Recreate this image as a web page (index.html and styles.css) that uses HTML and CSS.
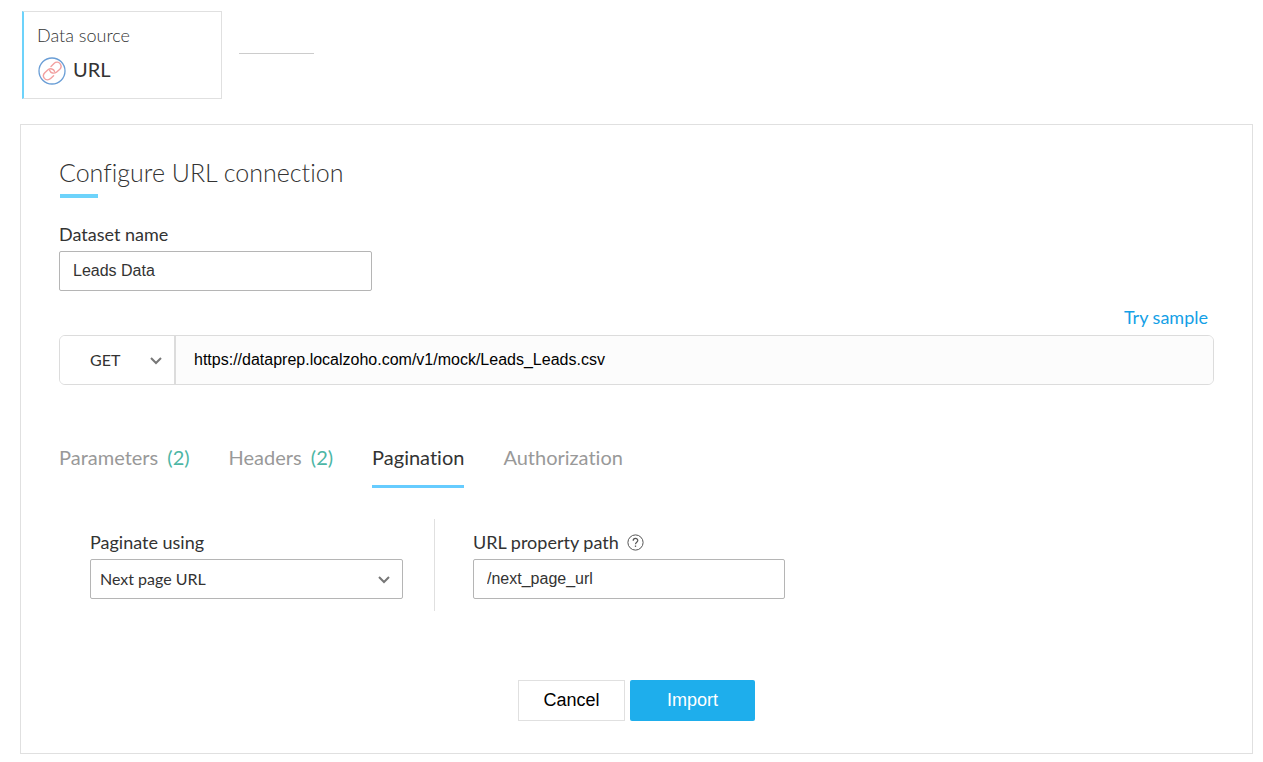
FILE: index.html
```html
<!DOCTYPE html>
<html lang="en">
  <head>
    <meta charset="UTF-8" />
    <meta name="viewport" content="width=device-width, initial-scale=1.0" />
    <title>Configure URL connection</title>
    <link rel="stylesheet" href="styles.css" />
  </head>
  <body>
    <!-- Pipeline steps -->
    <header class="steps">
      <div class="source-card">
        <div class="source-label">Data source</div>
        <div class="source-type">
          <svg class="source-icon" viewBox="0 0 28 28" fill="none">
            <circle cx="14" cy="14" r="13" stroke="#6a9ed6" stroke-width="1.3" />
            <g stroke="#f2a0a0" stroke-width="1.4" stroke-linecap="round" stroke-linejoin="round">
              <path d="M13 9.4 L16 6.4 C18 4.6 20.6 4.8 22 6.6 C23.6 8.6 23.4 10.6 21.8 12.2 L18.4 15.2 C16 17 12.6 16.2 11.6 13.2" />
              <path d="M15.6 18.8 L12.6 21.6 C10.6 23.4 8 23.2 6.4 21.4 C4.8 19.4 5.2 17.4 6.8 15.8 L10 12.8 C12.4 11 15.6 11.8 16.6 14.6" />
            </g>
          </svg>
          <span>URL</span>
        </div>
      </div>
      <div class="connector"></div>
    </header>

    <!-- Connection form -->
    <main class="panel">
      <form id="connectionForm">
        <h1>Configure URL connection</h1>

        <div class="field">
          <label for="datasetName">Dataset name</label>
          <input type="text" id="datasetName" value="Leads Data" />
        </div>

        <div class="sample-row"><a href="#">Try sample</a></div>

        <div class="request">
          <div class="select-wrap method">
            <select id="method" aria-label="Request method">
              <option>GET</option>
              <option>POST</option>
            </select>
            <svg class="chevron" viewBox="0 0 12 8"><path d="M1 1 L6 6 L11 1" /></svg>
          </div>
          <input
            type="text"
            id="url"
            aria-label="URL"
            value="https://dataprep.localzoho.com/v1/mock/Leads_Leads.csv"
          />
        </div>

        <nav class="tabs">
          <a href="#">Parameters <span class="count">(2)</span></a>
          <a href="#">Headers <span class="count">(2)</span></a>
          <a href="#" class="active">Pagination</a>
          <a href="#">Authorization</a>
        </nav>

        <div class="pagination">
          <div class="field paginate-using">
            <label for="paginateUsing">Paginate using</label>
            <div class="select-wrap">
              <select id="paginateUsing">
                <option>Next page URL</option>
              </select>
              <svg class="chevron" viewBox="0 0 12 8"><path d="M1 1 L6 6 L11 1" /></svg>
            </div>
          </div>
          <div class="field property-path">
            <label for="propertyPath">
              URL property path
              <svg class="help" viewBox="0 0 17 17" fill="none" stroke="#555">
                <circle cx="8.5" cy="8.5" r="7.6" />
                <path d="M6.2 6.7 C6.2 3.7 10.8 3.8 10.8 6.5 C10.8 8.2 8.5 8.2 8.5 10.2" stroke-width="1.2" />
                <path d="M8.5 11.5 V12.9" stroke-width="1.3" />
              </svg>
            </label>
            <input type="text" id="propertyPath" value="/next_page_url" />
          </div>
        </div>

        <div class="actions">
          <button type="button" class="cancel">Cancel</button>
          <button type="submit" class="import">Import</button>
        </div>
      </form>
    </main>
  </body>
</html>
```

FILE: styles.css
```css
* {
  box-sizing: border-box;
}
body {
  margin: 0;
  padding: 11px 10px 8px 20px;
  font-family: Lato, sans-serif;
  font-size: 18px;
  font-variant-ligatures: none;
  line-height: 24px;
  color: #333;
  background: #fff;
}
a {
  text-decoration: none;
}

/* steps */
.steps {
  display: flex;
  gap: 17px;
  margin: 0 0 25px 2px;
}
.source-card {
  width: 200px;
  height: 88px;
  padding: 11px 13px;
  border: 1px solid #e0e0e0;
  border-left: 2px solid #6dd3fb;
}
.source-label {
  font-weight: 300;
}
.source-type {
  display: flex;
  gap: 7px;
  margin-top: 10px;
  font-size: 20px;
}
.source-icon {
  width: 28px;
  height: 28px;
  margin-left: 1px;
}
.connector {
  width: 75px;
  height: 43px;
  border-bottom: 1px solid #ccc;
}

/* panel */
.panel {
  padding: 31px 38px 32px;
  border: 1px solid #e0e0e0;
}
h1 {
  margin: 0 0 24px;
  font-size: 25px;
  font-weight: 300;
  line-height: 32px;
}
h1::after {
  content: "";
  display: block;
  width: 38px;
  height: 4px;
  margin: 6px 0 0 1px;
  background: #6dd3fb;
}
.field {
  width: 313px;
}
.field label {
  display: flex;
  align-items: center;
  gap: 8px;
  margin-bottom: 5px;
}
input,
select {
  display: block;
  width: 100%;
  height: 40px;
  padding: 0 13px;
  border: 1px solid #b5b5b5;
  border-radius: 2px;
  background: #fff;
  color: #333;
  font-family: "Liberation Sans", Arial, sans-serif;
  font-size: 16px;
}
select {
  appearance: none;
  padding: 0 9px 2px;
  font-family: Lato, sans-serif;
}
.select-wrap {
  position: relative;
}
.chevron {
  position: absolute;
  top: 50%;
  right: 13px;
  width: 12px;
  height: 8px;
  margin-top: -3px;
  fill: none;
  stroke: #777;
  stroke-width: 2;
  pointer-events: none;
}
.sample-row {
  margin: 14px 6px 6px 0;
  text-align: right;
}
.sample-row a {
  color: #14a0e6;
}

/* request bar */
.request {
  display: flex;
  height: 50px;
  border: 1px solid #dcdcdc;
  border-radius: 6px;
  overflow: hidden;
}
.request select,
.request input {
  height: 100%;
  border: 0;
  border-radius: 0;
}
.request input {
  flex: 1;
  padding: 0 18px;
  background: #fcfcfc;
  color: #000;
}
.method {
  width: 116px;
  border-right: 2px solid #dcdcdc;
}
.method select {
  padding: 0 30px 2px;
}
.method .chevron {
  right: 12px;
}

/* tabs */
.tabs {
  display: flex;
  gap: 39px;
  margin-top: 60px;
  font-size: 20px;
}
.tabs a {
  padding-bottom: 16px;
  border-bottom: 3px solid transparent;
  color: #999;
}
.tabs .active {
  color: #333;
  border-color: #66ccff;
}
.count {
  margin-left: 4px;
  color: #4db6a5;
}

/* pagination */
.pagination {
  display: flex;
  margin: 31px 0 69px 31px;
}
.pagination .field {
  padding: 11px 0 12px;
}
.pagination .paginate-using {
  width: 345px;
  padding-right: 31px;
  border-right: 1px solid #e0e0e0;
}
.pagination .property-path {
  width: 350px;
  padding-left: 38px;
}
.help {
  width: 17px;
  height: 17px;
}

/* actions */
.actions {
  display: flex;
  justify-content: center;
  gap: 5px;
}
button {
  height: 41px;
  font-family: "Liberation Sans", Arial, sans-serif;
  font-size: 18px;
  cursor: pointer;
}
.cancel {
  width: 107px;
  border: 1px solid #e0e0e0;
  background: #fff;
  color: #000;
}
.import {
  width: 125px;
  border: 0;
  border-radius: 2px;
  background: #1eaeec;
  color: #fff;
}
```
